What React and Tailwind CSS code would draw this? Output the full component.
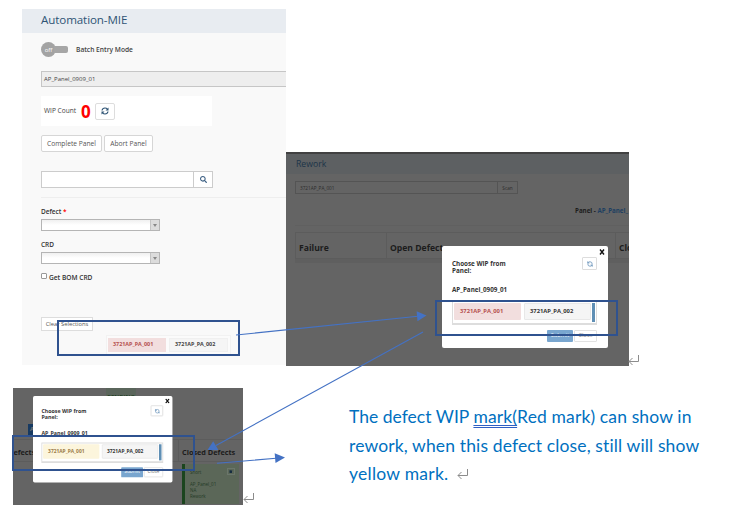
import React from "react";
import { FaSearch, FaTrash } from "react-icons/fa";
import { RefreshCw } from "lucide-react";

function RefreshBold() {
  return (
    <svg width="8" height="8" viewBox="0 0 16 16" fill="none" stroke="#2f5475" strokeWidth="2.4">
      <path d="M2 7C2.6 3.8 5 2 8 2C10 2 11.6 2.8 12.8 4.2M14 9C13.4 12.2 11 14 8 14C6 14 4.4 13.2 3.2 11.8" />
      <path d="M15 1V7H9ZM1 15V9H7Z" fill="#2f5475" stroke="none" />
    </svg>
  );
}

function Select() {
  return (
    <div className="flex h-[12px] w-[119px] border border-[#b5b5b5] bg-gradient-to-b from-[#f0f0f0] to-white to-50%">
      <div className="flex-1" />
      <div className="flex w-[9px] items-center justify-center border-l border-[#c4c4c4] bg-[#dcdcdc]">
        <svg width="4" height="3" viewBox="0 0 4 3"><path d="M0 0H4L2 3Z" fill="#888" /></svg>
      </div>
    </div>
  );
}

function EntryPanel() {
  return (
    <section className="mb-px flex h-[356px] w-[264px] shrink-0 flex-col overflow-hidden bg-[#f9f9f9]">
      <header className="flex h-[24px] items-center bg-[#e8ecf1] pb-[3px] pl-[19px] text-[11.6px] leading-none text-[#2f5475]">
        <span className="tracking-[-0.1px]">Automation-MIE</span>
      </header>
      <div className="flex flex-1 flex-col items-start pl-[19px] pt-[9px]">
        <div className="flex h-[15px] items-center">
          <div className="flex h-[15px] w-[15px] items-center justify-center rounded-full bg-[#a3a3a3] text-[6px] leading-none text-white">off</div>
          <div className="-ml-[2px] h-[7px] w-[14px] rounded-r-[2px] bg-[#a6a6a6]" />
          <span className="ml-[8px] pt-px text-[6.65px] font-semibold leading-none text-[#444]">Batch Entry Mode</span>
        </div>
        <div className="mt-[14px] flex h-[16px] w-[245px] items-center border border-r-0 border-[#c6c6c6] bg-[#eee] pl-[2px] text-[6px] leading-none text-[#444]">AP_Panel_0909_01</div>
        <div className="mt-[9px] flex h-[30px] w-[171px] items-center bg-white pl-[3px]">
          <span className="w-[37px] text-[6.6px] leading-none text-[#444]">WIP Count</span>
          <span className="w-[14px] text-[17px] font-bold leading-none text-[#f00]">0</span>
          <div className="flex h-[17px] w-[20px] items-center justify-center rounded-[2px] border border-[#ddd]">
            <RefreshBold />
          </div>
        </div>
        <div className="mt-[9px] flex gap-[2px] text-[6.7px] leading-none text-[#555]">
          <div className="flex h-[17px] w-[61px] items-center justify-center rounded-[2px] border border-[#d6d6d6] bg-white pt-[2px]">Complete Panel</div>
          <div className="flex h-[17px] w-[49px] items-center justify-center rounded-[2px] border border-[#d6d6d6] bg-white pt-[2px]">Abort Panel</div>
        </div>
        <div className="mt-[19px] flex h-[17px] w-[172px] border border-[#ccc] bg-white">
          <div className="flex-1" />
          <div className="flex w-[19px] items-center justify-center border-l border-[#ccc]"><FaSearch size={7} color="#3c5f83" /></div>
        </div>
        <div className="mt-[9px] h-px w-full bg-[#eee]" />
        <div className="mt-[9px] h-[10px] text-[6.5px] font-semibold leading-[10px] text-[#333]">Defect <span className="text-[#f00]">*</span></div>
        <div className="mt-[2px]"><Select /></div>
        <div className="mt-[9px] h-[10px] text-[6.5px] font-semibold leading-[10px] text-[#333]">CRD</div>
        <div className="mt-[2px]"><Select /></div>
        <div className="mt-[9px] flex h-[8px] items-start">
          <div className="h-[6px] w-[6px] rounded-[1px] border border-[#999] bg-white" />
          <span className="ml-[2px] text-[6.6px] font-semibold leading-[9px] text-[#333]">Get BOM CRD</span>
        </div>
        <div className="mt-[36px] flex h-[14px] w-[52px] items-center justify-center whitespace-nowrap border border-[#ddd] bg-white pt-px text-[5.8px] leading-none text-[#555]">Clear Selections</div>
        <div className="ml-[65px] mt-[4px] flex h-[20px] w-[125px] gap-[3px] border border-[#f2f2f2] bg-[#fbfbfb] px-px py-[2px] text-[5.4px] font-bold leading-none">
          <div className="flex h-[14px] w-[58px] items-center bg-[#f2dede] pl-[5px] text-[#b5504e]">3721AP_PA_001</div>
          <div className="flex h-[14px] w-[59px] items-center border border-[#f0f0f0] bg-[#f5f5f5] pl-[5px] text-[#444]">3721AP_PA_002</div>
        </div>
      </div>
    </section>
  );
}

function WipDialog({ markClass }) {
  return (
    <div className="flex h-[102px] w-[166px] flex-col rounded-[2px] bg-white pl-[10px] pr-[11px] text-[#333]">
      <div className="-mr-[8px] flex h-[9px] items-end justify-end">
        <svg width="6" height="6" viewBox="0 0 6 6"><path d="M1 0.5L5 5.5M5 0.5L1 5.5" stroke="#111" strokeWidth="1.4" /></svg>
      </div>
      <div className="mt-px flex justify-between">
        <div className="pt-[4px] text-[6.3px] font-bold leading-[7px]">Choose WIP from<br />Panel:</div>
        <div className="mt-px flex h-[13px] w-[15px] items-center justify-center rounded-[1px] border border-[#ddd]"><RefreshCw size={6} strokeWidth={3} color="#5f8cb5" className="-scale-x-100" /></div>
      </div>
      <div className="mt-[10px] h-[12px] text-[6.3px] font-bold leading-[12px]">AP_Panel_0909_01</div>
      <div className="mt-[5px] flex h-[24px] w-[145px] items-start gap-[3px] border border-[#ddd] border-b-2 p-px pr-0 text-[5.8px] font-bold leading-none">
        <div className={"flex h-[17px] w-[67px] shrink-0 items-center rounded-[1px] pl-[6px] " + markClass}>3721AP_PA_001</div>
        <div className="flex h-[17px] w-[67px] shrink-0 items-center rounded-[1px] border border-[#e8e8e8] bg-[#f5f5f5] pl-[5px] text-[#333]">3721AP_PA_002</div>
        <div className="-ml-[2px] h-[19px] w-[3px] shrink-0 bg-[#5f8fb5]" />
      </div>
      <div className="mt-[5px] flex justify-end gap-px text-[5.6px] leading-none">
        <div className="flex h-[12px] w-[26px] items-center justify-center rounded-[1px] bg-[#79a6cf] text-white">Submit</div>
        <div className="flex h-[12px] w-[23px] items-center justify-center rounded-[1px] border border-[#e2e2e2] text-[#777]">Close</div>
      </div>
    </div>
  );
}

function ReworkPanel() {
  return (
    <section className="relative h-[214px] w-[343px] shrink-0 overflow-hidden bg-[#646464] text-[#1c1c1c]">
      <header className="flex h-[22px] items-center border-t-2 border-[#414141] bg-[#5d6062] pb-px pl-[10px] pt-[2px] text-[8.7px] leading-none text-[#1c3448]">Rework</header>
      <div className="ml-[9px] mt-[7px] flex h-[13px] w-[223px] border border-[#545454] text-[4.7px] leading-[12px] text-[#2c2c2c]">
        <div className="flex-1 pl-[4px]">3721AP_PA_001</div>
        <div className="w-[20px] border-l border-[#545454] text-center">Scan</div>
      </div>
      <div className="ml-[289px] mt-[12px] h-[10px] whitespace-nowrap text-[6.2px] font-bold leading-[10px]">Panel - <span className="text-[#1d3f61]">AP_Panel_</span></div>
      <div className="ml-[9px] mt-[9px] h-px bg-[#606060]" />
      <div className="ml-[9px] mt-[6px] flex h-[27px] border border-r-0 border-[#5c5c5c] text-[8.6px] font-bold leading-[30px]">
        <div className="w-[91px] shrink-0 border-r border-[#5c5c5c] pl-[3px]">Failure</div>
        <div className="w-[229px] shrink-0 border-r border-[#5c5c5c] pl-[3px]">Open Defects</div>
        <div className="pl-[3px]">Closed</div>
      </div>
      <div className="ml-[9px] h-[4px] bg-[#5f5f5f]" />
      <div className="absolute left-[156px] top-[94px]"><WipDialog markClass="bg-[#f2dede] text-[#b5504e]" /></div>
    </section>
  );
}

function ClosedPanel() {
  return (
    <section className="relative flex h-[117px] w-[230px] shrink-0 flex-col overflow-hidden bg-[#646464] text-[#1c1c1c]">
      <div className="ml-[93px] h-[11px] w-[30px] bg-[#5a655b] pt-[5px] text-center text-[6px] font-bold leading-[8px] text-[#243f26]">PENDING</div>
      <div className="ml-[15px] mt-[25px] h-[11px] w-[12px] bg-[#173a62] pl-[2px] text-[6px] font-bold leading-[11px] text-[#777]">A</div>
      <div className="mt-[4px] flex h-[23px] border-y border-[#5c5c5c] text-[7.3px] font-bold leading-[25px]">
        <div className="-ml-[5px] w-[171px] shrink-0 border-r border-[#5c5c5c]">Defects</div>
        <div className="whitespace-nowrap pl-[3px]">Closed Defects</div>
      </div>
      <div className="ml-[169px] mt-[2px] flex h-[40px] w-[57px] justify-between border-l-[3px] border-[#1b451e] bg-[#5b6758] pl-[5px] pr-[4px] pt-[4px] text-[4.5px] leading-[6px] text-[#243a26]">
        <div className="whitespace-nowrap pt-px">Short<div className="mt-[6px]">AP_Panel_01<br />NA<br />Rework</div></div>
        <div className="flex h-[7px] w-[8px] items-center justify-center border border-[#6b766b]"><FaTrash size={3.5} color="#152c40" /></div>
      </div>
      <div className="absolute left-[20px] top-[8px] origin-top-left scale-x-[0.84] scale-y-[0.847]"><WipDialog markClass="bg-[#fcf5dc] text-[#9a7a45]" /></div>
    </section>
  );
}

function ReturnMark() {
  return (
    <svg width="12" height="10" viewBox="0 0 12 10" fill="none" stroke="#8c8c8c"><path d="M10.5 0V6.5H1M4.5 3L1 6.5L4.5 10" /></svg>
  );
}

function Annotations() {
  return (
    <>
      <div className="absolute left-[57px] top-[320px] h-[36px] w-[183px] border-2 border-[#2f528f]" />
      <div className="absolute left-[435px] top-[300px] h-[36px] w-[183px] border-2 border-[#2f528f]" />
      <div className="absolute left-[12px] top-[435px] h-[36px] w-[183px] border-2 border-[#2f528f]" />
      <svg className="absolute left-0 top-0" width="734" height="509" viewBox="0 0 734 509" fill="#4472c4" stroke="none">
        <path d="M236 335L418 316.3M423 332L216 445.5M217 463.3L276 458.3" stroke="#4472c4" strokeWidth="1.1" />
        <path d="M426.5 315.5L416.6 311.3L417.5 321.3Z" />
        <path d="M207.5 450L213.2 441.2L218.4 450Z" />
        <path d="M285 457.5L274.7 453.2L275.5 463Z" />
      </svg>
      <div className="absolute left-[628px] top-[355px]"><ReturnMark /></div>
      <div className="absolute left-[243px] top-[493px]"><ReturnMark /></div>
    </>
  );
}

export default function App() {
  return (
    <main className="relative h-[509px] w-[734px] overflow-hidden bg-white pt-[9px] font-['Open_Sans',sans-serif]">
      <div className="flex h-[357px] items-end pl-[22px]">
        <EntryPanel />
        <ReworkPanel />
      </div>
      <div className="mt-[22px] flex pl-[13px]">
        <ClosedPanel />
        <div className="ml-[106px] mt-[15px] whitespace-nowrap font-['Lato',sans-serif] text-[17.5px] leading-[28.5px] tracking-[0.13px] text-[#0070c0] [font-variant-ligatures:none]">
          <div><span className="tracking-[0.02px]">The defect WIP </span><span className="underline decoration-[#2f5fc4] decoration-double decoration-1 underline-offset-2 [text-decoration-skip-ink:none]">mark(</span>Red mark) can show in</div>
          <div>rework, when this defect close, still will show</div>
          <div className="flex items-center"><span className="tracking-[0.25px]">yellow mark.</span><span className="ml-[9px]"><ReturnMark /></span></div>
        </div>
      </div>
      <Annotations />
    </main>
  );
}
